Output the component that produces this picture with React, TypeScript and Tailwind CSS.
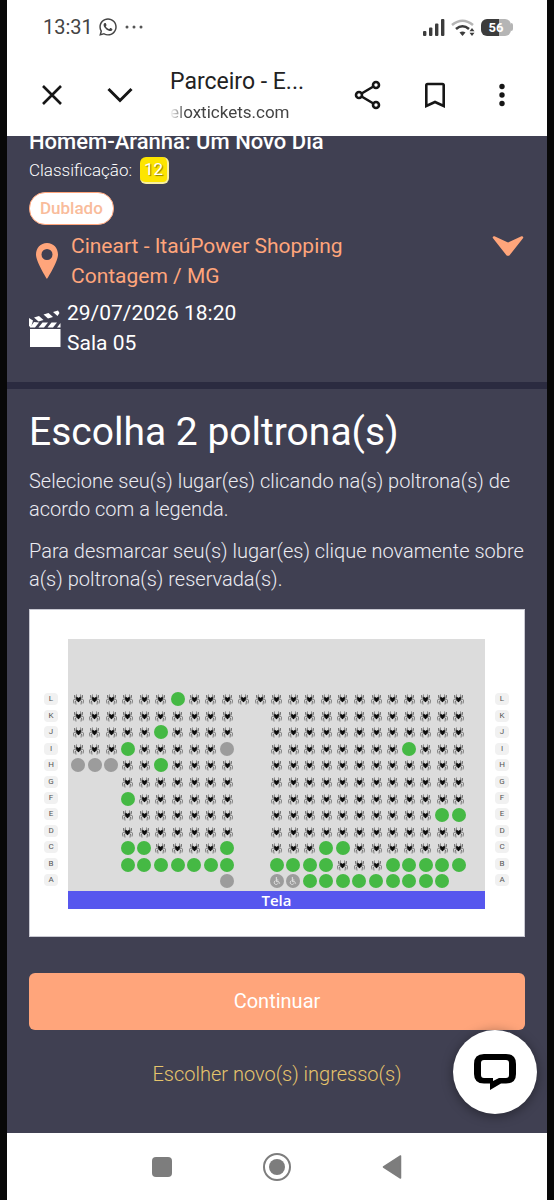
import React from "react";
import { FaWhatsapp } from "react-icons/fa";

// s = taken by spider, g = free, x = blocked, w = wheelchair, . = no seat
const rows = [
  { name: "L", seats: "ssssssgsssssssssssssssss" },
  { name: "K", seats: "ssssssssss..ssssssssssss" },
  { name: "J", seats: "sssssgssss..ssssssssssss" },
  { name: "I", seats: "sssgsssssx..ssssssssgsss" },
  { name: "H", seats: "xxxssgssss..ssssssssssss" },
  { name: "G", seats: "...sssssss..ssssssssssss" },
  { name: "F", seats: "...gssssss..ssssssssssss" },
  { name: "E", seats: "...sssssss..ssssssssssgg" },
  { name: "D", seats: "...sssssss..ssssssssssss" },
  { name: "C", seats: "...ggssssg..sssggsssssss" },
  { name: "B", seats: "...ggggggg..ggggsssggggg" },
  { name: "A", seats: ".........x..wwggggggggg." },
];

const Spider: React.FC = () => (
  <svg viewBox="0 0 22 22" className="w-[11px] h-[11px]" fill="none" stroke="#555" strokeWidth="1.5">
    <path d="M9 8 6 6 7 1M13 8l3-2-1-5" />
    <path d="M9 9 3 7 3 2M13 9l6-2 0-5" />
    <path d="M9 11 3 10 1 13 2 19M13 11l6-1 2 3-1 6" />
    <path d="M9 12 5 14 6 21M13 12l4 2-1 7" />
    <path d="M7 5 11 8l4-3 1 5-3 4h-4l-3-4z" fill="#0c0c0c" stroke="none" />
    <ellipse cx="11" cy="12" rx="2.4" ry="4.6" fill="#0c0c0c" stroke="none" />
  </svg>
);

const Wheelchair: React.FC = () => (
  <svg viewBox="0 0 24 24" className="w-2 h-2" fill="none" stroke="#eee" strokeWidth="2.4">
    <circle cx="10" cy="3" r="1.4" fill="#eee" />
    <path d="M10 6v8h7l3 6M10 9h6M7 11a6 6 0 1 0 8 8" />
  </svg>
);

const Seat: React.FC<{ kind: string; label: string }> = ({ kind, label }) => {
  if (kind === ".") return <span />;
  if (kind === "s") {
    return (
      <button disabled aria-label={label} className="flex items-center justify-center pt-px">
        <Spider />
      </button>
    );
  }
  return (
    <button aria-label={label} disabled={kind !== "g"} className="flex items-center justify-center">
      <span
        className={
          kind === "g"
            ? "block w-[14px] h-[14px] rounded-full bg-[#45b944]"
            : "flex items-center justify-center w-[14px] h-[14px] rounded-full bg-[#9c9c9c]"
        }
      >
        {kind === "w" && <Wheelchair />}
      </span>
    </button>
  );
};

const RowLabels: React.FC = () => (
  <div className="grid grid-rows-12 w-[14px] shrink-0 pt-[52px] pb-5">
    {rows.map((row) => (
      <div key={row.name} className="flex items-center">
        <span className="w-full h-3 rounded bg-[#f1f1f1] text-[#555] text-[8px] leading-3 text-center">
          {row.name}
        </span>
      </div>
    ))}
  </div>
);

const StatusBar: React.FC = () => (
  <div className="flex items-center h-[54px] pl-9 pr-[34px] text-[#444]">
    <span className="text-xl">13:31</span>
    <FaWhatsapp className="ml-[5px] w-5 h-5" />
    <svg viewBox="0 0 18 4" className="ml-[7px] w-[18px] h-1" fill="#555">
      <circle cx="2" cy="2" r="1.5" />
      <circle cx="9" cy="2" r="1.5" />
      <circle cx="16" cy="2" r="1.5" />
    </svg>
    <div className="ml-auto flex items-center gap-[6px]">
      <svg viewBox="0 0 22 17" className="w-[22px] h-[17px]" fill="#3c3c3c">
        <rect x="0" y="12" width="3.4" height="5" rx="1" />
        <rect x="6" y="8.5" width="3.4" height="8.5" rx="1" />
        <rect x="12" y="4.5" width="3.4" height="12.5" rx="1" />
        <rect x="18" y="0" width="3.4" height="17" rx="1" />
      </svg>
      <svg viewBox="0 0 24 17" className="w-6 h-[17px]" fill="none" strokeWidth="2.6">
        <path d="M1 6Q11.5-2.5 22 6" stroke="#b5b5b5" />
        <path d="M5 10Q11.5 4.5 18 10" stroke="#3c3c3c" />
        <path d="M8.5 13.5q3-2 6 0l-3 3.5z" fill="#3c3c3c" />
        <path d="m21 9 2.5 3.2h-5zM21 17l2.5-3.2h-5z" fill="#3c3c3c" />
      </svg>
      <div className="flex items-center">
        <span className="w-[30px] h-[17px] rounded-md bg-linear-to-r from-[#3c3c3c] from-60% to-[#b5b5b5] to-60% text-white text-[13px] leading-[17px] font-bold text-center">
          56
        </span>
        <span className="w-[2px] h-2 rounded-r bg-[#b5b5b5]" />
      </div>
    </div>
  </div>
);

const BrowserBar: React.FC = () => (
  <div className="flex items-center h-[82px] pl-[34px] pr-[42px] text-[#222]">
    <button aria-label="Fechar">
      <svg viewBox="0 0 22 22" className="w-[22px] h-[22px]" fill="none" stroke="#161616" strokeWidth="2.6">
        <path d="M2 2l18 18M20 2 2 20" />
      </svg>
    </button>
    <button aria-label="Minimizar" className="ml-[44px]">
      <svg viewBox="0 0 26 16" className="w-[26px] h-4" fill="none" stroke="#161616" strokeWidth="3">
        <path d="M1.5 2 13 13.5 24.5 2" />
      </svg>
    </button>
    <div className="ml-[37px] min-w-0 flex-1 pt-[2px]">
      <p className="text-[23px] leading-8 whitespace-nowrap">Parceiro - E...</p>
      <p className="w-fit text-[17px] leading-7 text-[#444] [mask-image:linear-gradient(to_right,transparent,#000_16px)]">
        eloxtickets.com
      </p>
    </div>
    <div className="flex items-center">
      <button aria-label="Compartilhar">
        <svg viewBox="0 0 28 30" className="w-7 h-[30px]" fill="none" stroke="#161616" strokeWidth="2.6">
          <circle cx="5" cy="15" r="3" />
          <circle cx="22" cy="5" r="3" />
          <circle cx="22" cy="25" r="3" />
          <path d="m7.6 13.5 11.8-7M7.6 16.5l11.8 7" />
        </svg>
      </button>
      <button aria-label="Salvar" className="ml-[42px]">
        <svg viewBox="0 0 22 26" className="w-[22px] h-[26px]" fill="none" stroke="#161616" strokeWidth="2.6">
          <path d="M2.3 24V3.3Q2.3 2 3.6 2h14.8q1.3 0 1.3 1.3V24L11 20z" />
        </svg>
      </button>
      <button aria-label="Mais" className="ml-[53px]">
        <svg viewBox="0 0 6 24" className="w-[6px] h-6" fill="#161616">
          <circle cx="3" cy="3.5" r="2.7" />
          <circle cx="3" cy="12" r="2.7" />
          <circle cx="3" cy="20.5" r="2.7" />
        </svg>
      </button>
    </div>
  </div>
);

const SessionInfo: React.FC = () => (
  <section className="-mt-2 px-[22px] pb-6 border-b-[7px] border-[#2b2b40]">
    <h2 className="text-[22px] leading-7 font-medium">Homem-Aranha: Um Novo Dia</h2>
    <div className="flex items-center gap-2 h-7">
      <span className="pt-[2px] text-[17px] font-light">Classificação:</span>
      <span className="w-[29px] h-[27px] rounded-md bg-[#fde500] border-r-2 border-b-2 border-[#f8efa0] text-[17px] leading-6 text-center text-shadow-[1px_1px_1px_#8a7d00]">
        12
      </span>
    </div>
    <span className="mt-2 inline-block rounded-2xl border border-[#ffa57b] bg-white px-[10px] text-[17px] leading-[31px] font-medium text-[#f9bc9b]">
      Dublado
    </span>
    <div className="flex items-start text-[21px] leading-[30px] text-[#ffa57b]">
      <svg viewBox="0 0 24 36" className="ml-[6px] mt-[18px] w-6 h-9" fill="#ffa57b">
        <path
          fillRule="evenodd"
          d="M12 0C5.5 0 1 5 1 11.5 1 19 12 36 12 36s11-17 11-24.5C23 5 18.5 0 12 0zm0 6a5.5 5.5 0 1 1 0 11 5.5 5.5 0 0 1 0-11z"
        />
      </svg>
      <p className="ml-3 mt-[6px]">
        Cineart - ItaúPower Shopping
        <br />
        Contagem / MG
      </p>
      <button aria-label="Ver detalhes" className="ml-auto mt-[10px]">
        <svg
          viewBox="0 0 34 22"
          className="w-[34px] h-[22px]"
          fill="#ffa57b"
          stroke="#ffa57b"
          strokeWidth="2.5"
          strokeLinejoin="round"
        >
          <path d="M3 2.5 17 9 31 2.5 18 19q-1 1-2 0z" />
        </svg>
      </button>
    </div>
    <div className="mt-[7px] flex items-start text-[21px] leading-[30px]">
      <svg viewBox="0 0 32 38" className="mt-3 w-8 h-[38px]" fill="#fff">
        <path d="M1 19h30.5v18H1z" />
        <path d="M0 8l4 2.5L2 17.5 0 16zM5 7.5l5-1.5 4.5 4-5 1.5zM14.5 4.5l5-1.5 4.5 4-5 1.5zM24 2l5-1.5L30.5 3l-2 3z" />
        <path d="M5 12l5 .5-4 5H1zM13.5 12.5h5.5l-4 5H9.5zM22.5 12.5H28l-4 5h-5.5zM31.5 13v4.5H28z" />
      </svg>
      <p className="ml-[6px]">
        29/07/2026 18:20
        <br />
        Sala 05
      </p>
    </div>
  </section>
);

const SeatMap: React.FC = () => (
  <div className="mt-4 flex border border-[#c9c9d2] bg-white pt-[29px] pb-[27px] pl-[14px] pr-[15px]">
    <RowLabels />
    <div className="mx-[10px] min-w-0 flex-1 bg-[#dcdcdc]">
      <div className="pt-[52px] pl-[2px] pr-[18px] pb-px">
        <div className="grid grid-rows-12 aspect-[2/1] [grid-template-columns:repeat(24,minmax(0,1fr))]">
          {rows.map((row) =>
            row.seats
              .split("")
              .map((kind, i) => (
                <Seat key={row.name + i} kind={kind} label={`Poltrona ${row.name}${i + 1}`} />
              ))
          )}
        </div>
      </div>
      <div className="h-[18px] bg-[#5757ee] font-['Open_Sans',sans-serif] text-[15px] leading-[18px] font-semibold text-center">
        Tela
      </div>
    </div>
    <RowLabels />
  </div>
);

const App: React.FC = () => {
  return (
    <div className="relative min-h-screen flex flex-col bg-[#080808] px-[7px] font-[Roboto,sans-serif] text-white">
      <header className="bg-white">
        <StatusBar />
        <BrowserBar />
      </header>
      <main className="relative flex-1 overflow-hidden bg-[#404052]">
        <SessionInfo />
        <section className="px-[22px] pt-4">
          <h1 className="text-[39px] leading-[54px]">Escolha 2 poltrona(s)</h1>
          <p className="mt-2 text-xl leading-7 font-light text-[#ececf2]">
            Selecione seu(s) lugar(es) clicando na(s) poltrona(s) de acordo com a legenda.
          </p>
          <p className="mt-[14px] text-xl leading-7 font-light text-[#ececf2]">
            Para desmarcar seu(s) lugar(es) clique novamente sobre a(s) poltrona(s) reservada(s).
          </p>
          <SeatMap />
          <button className="mt-9 block w-full h-[57px] rounded-md bg-[#ffa57b] text-xl">
            Continuar
          </button>
          <a href="#" className="mt-[29px] mb-9 block text-center text-xl leading-[30px] font-light text-[#e6c46c]">
            Escolher novo(s) ingresso(s)
          </a>
        </section>
        <button
          aria-label="Chat"
          className="absolute right-[10px] bottom-[19px] flex items-center justify-center w-[84px] h-[84px] rounded-full bg-white shadow-[0_2px_12px_rgba(0,0,0,0.4)]"
        >
          <svg viewBox="0 0 42 36" className="w-[42px] h-9" fill="#000">
            <path
              fillRule="evenodd"
              d="M10 0h22q10 0 10 10v10q0 9.500-10 9.500h-5L16 36v-6.500h-6q-10 0-10-9.500V10Q0 0 10 0zm0 6Q7 6 7 9v12q0 3 3 3h9v3l6-3h7q3 0 3-3V9q0-3-3-3z"
            />
          </svg>
        </button>
      </main>
      <nav className="flex items-center justify-center h-[67px] bg-white">
        <button aria-label="Recentes" className="w-5 h-5 rounded bg-[#7d7d7d]" />
        <button
          aria-label="Início"
          className="mx-[91px] flex items-center justify-center w-7 h-7 rounded-full border-2 border-[#7d7d7d]"
        >
          <span className="w-4 h-4 rounded-full bg-[#7d7d7d]" />
        </button>
        <button aria-label="Voltar">
          <svg
            viewBox="0 0 20 24"
            className="w-5 h-6"
            fill="#7d7d7d"
            stroke="#7d7d7d"
            strokeWidth="1.5"
            strokeLinejoin="round"
          >
            <path d="M1.5 12 18.5 1v22z" />
          </svg>
        </button>
      </nav>
    </div>
  );
};

export default App;
